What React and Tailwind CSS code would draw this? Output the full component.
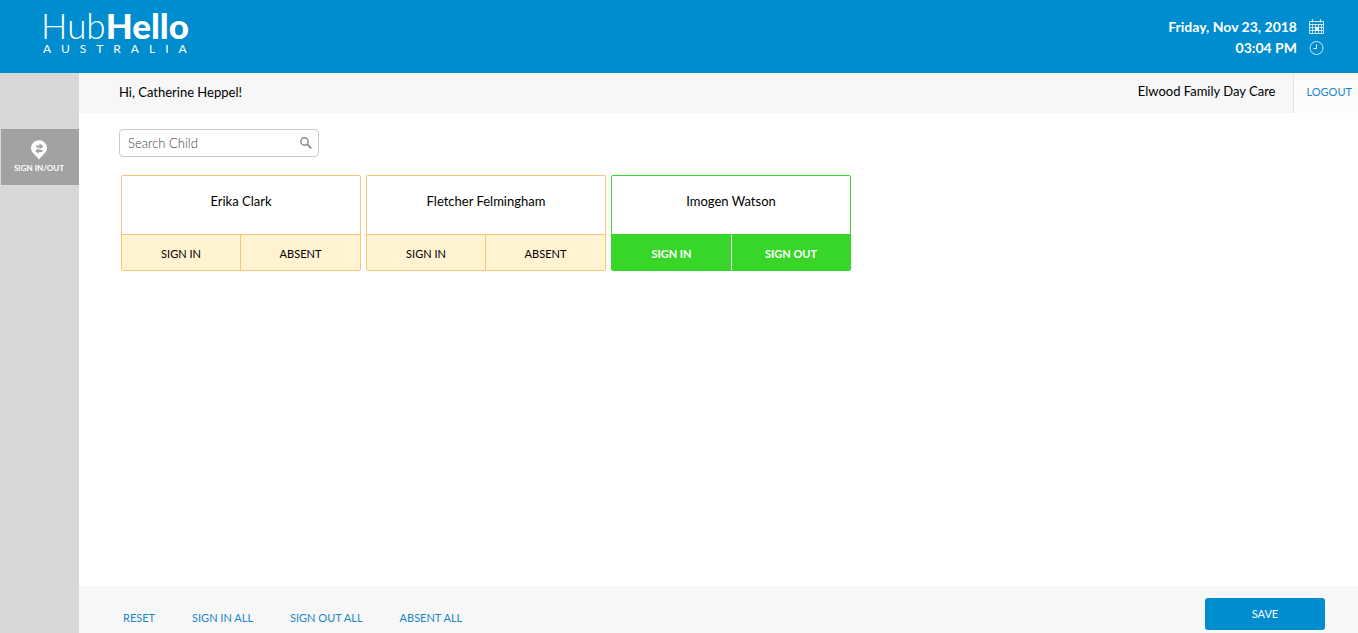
import { useState } from "react";

const initialChildren = [
  { id: 1, name: "Erika Clark", signedIn: false },
  { id: 2, name: "Fletcher Felmingham", signedIn: false },
  { id: 3, name: "Imogen Watson", signedIn: true },
];

const bulkActions = ["RESET", "SIGN IN ALL", "SIGN OUT ALL", "ABSENT ALL"];

function CalendarIcon() {
  return (
    <svg className="h-4 w-4" viewBox="0 0 16 16" fill="none" stroke="#fff" aria-hidden="true">
      <path d="M0.5 2.5h14v12h-14zM0.5 5.5h14" strokeWidth="0.8" />
      <path d="M1 8.5h13M1 11.5h13M3.5 6v8M6.5 6v8M9.5 6v8M12.5 6v8" strokeWidth="0.7" />
      <path d="M3.5 0.5v3M11.5 0.5v3" strokeWidth="1.2" />
      <path d="M6.5 8.5h3v3h-3z" fill="#fff" />
    </svg>
  );
}

function ClockIcon() {
  return (
    <svg className="h-4 w-4" viewBox="0 0 16 16" fill="none" stroke="#fff" strokeWidth="0.8" aria-hidden="true">
      <circle cx="7.5" cy="8" r="6.5" />
      <path d="M7.5 4.5v4h-3" strokeWidth="1" />
    </svg>
  );
}

function PinIcon() {
  return (
    <svg className="h-5 w-4" viewBox="0 0 16 20" aria-hidden="true">
      <path d="M8 0.2a8 8 0 0 0-8 8c0 4.5 4.5 6.5 8 11.3c3.5-4.8 8-6.8 8-11.3a8 8 0 0 0-8-8z" fill="#fff" />
      <path d="M5 5.6h3.5V3.6l4 2.9-4 2.9V7.4H5zM11.5 11.9H8v1.9l-4-2.8 4-2.8v1.9h3.5z" fill="#a2a2a2" />
    </svg>
  );
}

function SearchIcon() {
  return (
    <svg className="h-3 w-3" viewBox="0 0 12 12" fill="none" stroke="#858585" aria-hidden="true">
      <circle cx="4.5" cy="4.5" r="3.7" strokeWidth="1.4" />
      <path d="M7.3 7.3l4 4" strokeWidth="1.8" />
    </svg>
  );
}

function Header() {
  return (
    <header className="flex h-[73px] shrink-0 items-start justify-between bg-[#008dcf] pl-[41px] pr-[33px] text-white">
      <div className="pt-2">
        <div className="text-[35px] leading-[34px]">
          <span className="font-light">Hub</span>
          <span className="font-black">Hello</span>
        </div>
        <div className="pl-[2px] text-xs leading-[14px] tracking-[10px]">AUSTRALIA</div>
      </div>
      <div className="pt-4 text-sm leading-[21px] font-bold">
        <div className="flex items-center justify-end gap-3">
          <span>Friday, Nov 23, 2018</span>
          <CalendarIcon />
        </div>
        <div className="flex items-center justify-end gap-3">
          <span>03:04 PM</span>
          <ClockIcon />
        </div>
      </div>
    </header>
  );
}

function Sidebar() {
  return (
    <nav className="w-[79px] shrink-0 bg-[#d8d8d8] pt-14">
      <a
        href="#sign"
        className="ml-px flex h-14 flex-col items-center bg-[#a2a2a2] pt-[11px] pr-[2px] text-[8px] leading-4 font-bold text-white"
      >
        <PinIcon />
        SIGN IN/OUT
      </a>
    </nav>
  );
}

function ChildCard({ child }) {
  const { name, signedIn } = child;
  const border = signedIn ? "border-[#39d62a]" : "border-[#fdc576]";
  const button = signedIn
    ? "bg-[#39d62a] font-bold text-white"
    : "bg-[#fff3d2] text-black";

  return (
    <article className={`w-60 overflow-hidden rounded-xs border bg-white ${border}`}>
      <h2 className="h-[58px] pt-[15px] text-center text-[13px] leading-5">{name}</h2>
      <div className={`grid h-9 grid-cols-2 border-t text-[11px] ${border}`}>
        <button type="button" className={`pt-1 ${button} ${signedIn ? "" : "border-r border-[#fdc576]"}`}>
          SIGN IN
        </button>
        <button type="button" className={`pt-1 ${button} ${signedIn ? "border-l border-white" : ""}`}>
          {signedIn ? "SIGN OUT" : "ABSENT"}
        </button>
      </div>
    </article>
  );
}

export default function App() {
  const [query, setQuery] = useState("");
  const children = initialChildren.filter((c) =>
    c.name.toLowerCase().includes(query.toLowerCase())
  );

  return (
    <div className="flex min-h-screen flex-col bg-white font-['Lato',sans-serif] text-black">
      <Header />
      <div className="flex flex-1">
        <Sidebar />
        <div className="flex min-w-0 flex-1 flex-col">
          {/* Greeting bar */}
          <div className="flex h-10 items-center bg-[#f7f7f7] pl-10 text-[13px]">
            <span>Hi, Catherine Heppel!</span>
            <span className="ml-auto pr-[18px] pb-[2px]">Elwood Family Day Care</span>
            <a
              href="#logout"
              className="flex h-full items-center border-l border-[#e4e4e4] bg-[#fbfbfb] pr-[6px] pb-[2px] pl-3 text-[11px] text-[#1a87c9]"
            >
              LOGOUT
            </a>
          </div>

          <main className="flex-1 px-10 pt-4">
            <label className="flex h-7 w-[200px] items-center rounded border border-[#ccc] pr-[6px] pl-2">
              <input
                type="text"
                aria-label="Search Child"
                placeholder="Search Child"
                value={query}
                onChange={(e) => setQuery(e.target.value)}
                className="min-w-0 flex-1 pt-[2px] text-[13px] font-light outline-none placeholder:text-[#444]"
              />
              <SearchIcon />
            </label>
            <div className="mt-[18px] flex flex-wrap gap-[5px] pl-[2px]">
              {children.map((child) => (
                <ChildCard key={child.id} child={child} />
              ))}
            </div>
          </main>

          {/* Bulk actions */}
          <footer className="flex h-[47px] items-start justify-between bg-[#f7f7f7] pr-[33px] pl-11">
            <div className="flex gap-[37px] pt-6 text-[11px] leading-4 text-[#1a87c9]">
              {bulkActions.map((label) => (
                <button key={label} type="button">
                  {label}
                </button>
              ))}
            </div>
            <button type="button" className="mt-3 h-8 w-[120px] rounded-[3px] bg-[#008dcf] text-[11px] text-white">
              SAVE
            </button>
          </footer>
        </div>
      </div>
    </div>
  );
}
